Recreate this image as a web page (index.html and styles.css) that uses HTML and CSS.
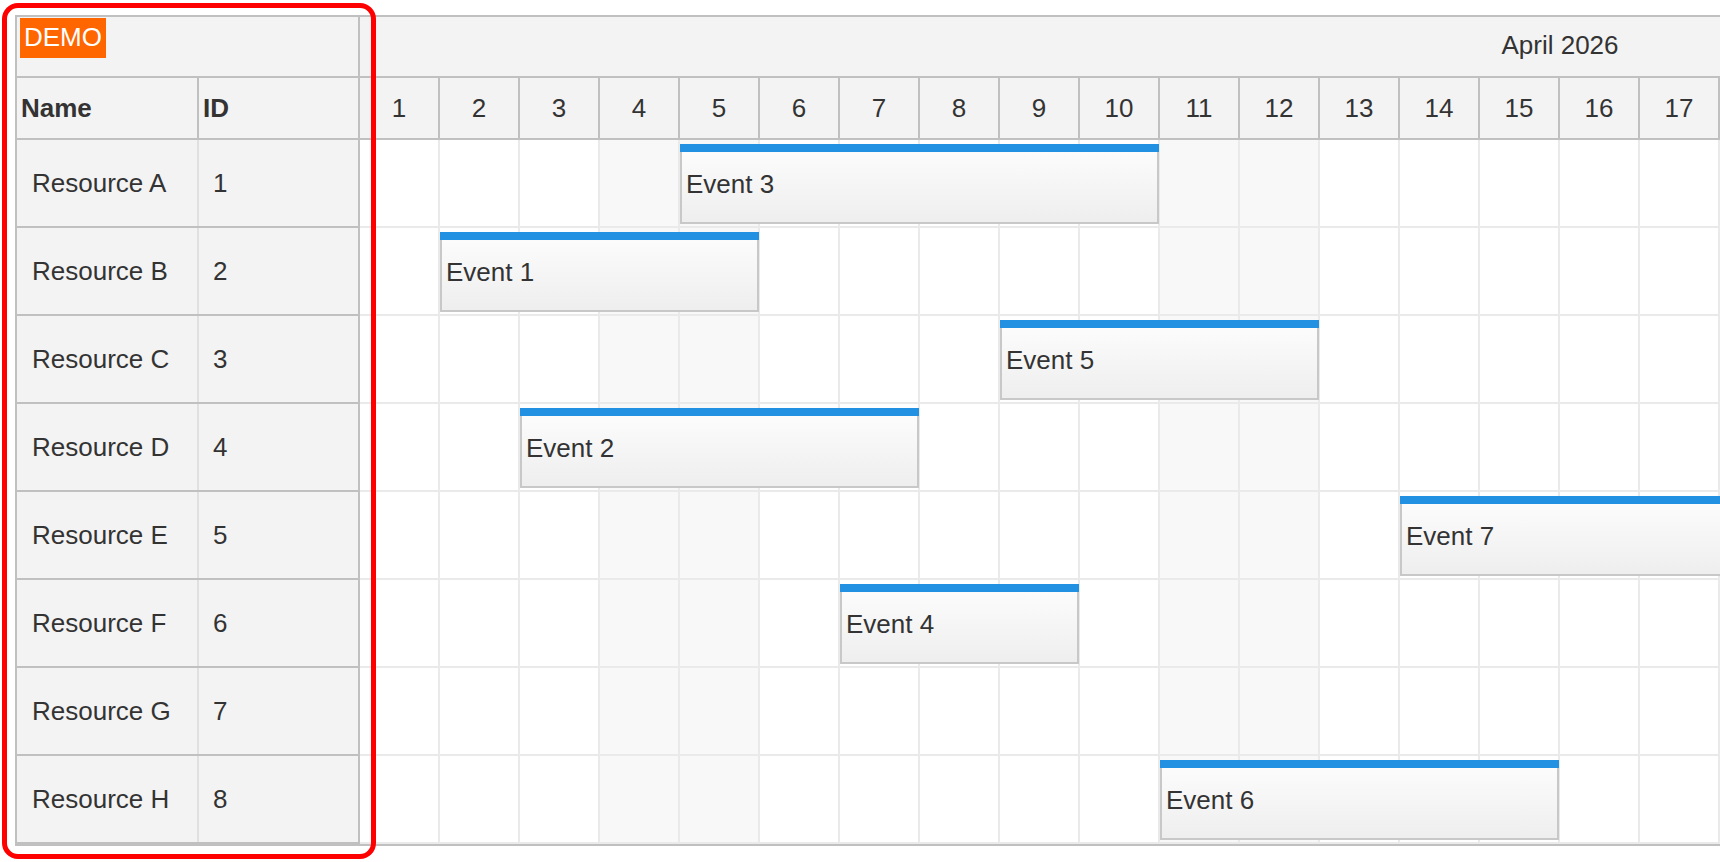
FILE: index.html
```html
<!DOCTYPE html>
<html>
<head>
    <title>Scheduler</title>
    <link rel="stylesheet" href="styles.css">
</head>
<body>
    <div class="scheduler">
        <div class="resources">
            <div class="corner"><span class="demo">DEMO</span></div>
            <div class="res-head">
                <div class="col-name">Name</div>
                <div class="col-id">ID</div>
            </div>
            <div class="res-row"><div class="col-name">Resource A</div><div class="col-id">1</div></div>
            <div class="res-row"><div class="col-name">Resource B</div><div class="col-id">2</div></div>
            <div class="res-row"><div class="col-name">Resource C</div><div class="col-id">3</div></div>
            <div class="res-row"><div class="col-name">Resource D</div><div class="col-id">4</div></div>
            <div class="res-row"><div class="col-name">Resource E</div><div class="col-id">5</div></div>
            <div class="res-row"><div class="col-name">Resource F</div><div class="col-id">6</div></div>
            <div class="res-row"><div class="col-name">Resource G</div><div class="col-id">7</div></div>
            <div class="res-row"><div class="col-name">Resource H</div><div class="col-id">8</div></div>
        </div>

        <div class="timeline">
            <div class="months">
                <div class="month">April 2026</div>
            </div>
            <div class="days">
                <div class="day">1</div><div class="day">2</div><div class="day">3</div><div class="day">4</div>
                <div class="day">5</div><div class="day">6</div><div class="day">7</div><div class="day">8</div>
                <div class="day">9</div><div class="day">10</div><div class="day">11</div><div class="day">12</div>
                <div class="day">13</div><div class="day">14</div><div class="day">15</div><div class="day">16</div>
                <div class="day">17</div>
            </div>

            <div class="lane">
                <div class="event" style="left: 320px; width: 479px;">Event 3</div>
            </div>
            <div class="lane">
                <div class="event" style="left: 80px; width: 319px;">Event 1</div>
            </div>
            <div class="lane">
                <div class="event" style="left: 640px; width: 319px;">Event 5</div>
            </div>
            <div class="lane">
                <div class="event" style="left: 160px; width: 399px;">Event 2</div>
            </div>
            <div class="lane">
                <div class="event" style="left: 1040px; width: 399px;">Event 7</div>
            </div>
            <div class="lane">
                <div class="event" style="left: 480px; width: 239px;">Event 4</div>
            </div>
            <div class="lane"></div>
            <div class="lane">
                <div class="event" style="left: 800px; width: 399px;">Event 6</div>
            </div>
        </div>
    </div>

    <div class="highlight"></div>
</body>
</html>
```

FILE: styles.css
```css
html, body {
    margin: 0;
    padding: 0;
    background: #fff;
    overflow: hidden;
}
body {
    font-family: "Liberation Sans", Arial, sans-serif;
    font-size: 26px;
    color: #333;
}
.scheduler {
    display: flex;
    margin: 15px 0 0 15px;
    width: 1705px;
    border-top: 2px solid #c0c0c0;
    border-left: 2px solid #c0c0c0;
    border-bottom: 2px solid #c0c0c0;
    box-sizing: border-box;
    overflow: hidden;
}
.resources {
    flex: 0 0 343px;
    background: #f3f3f3;
}
.corner {
    height: 61px;
    box-sizing: border-box;
    padding: 1px 0 0 3px;
    border-right: 2px solid #c0c0c0;
    border-bottom: 2px solid #c0c0c0;
}
.demo {
    display: inline-block;
    background: #ff6600;
    color: #fff;
    line-height: 30px;
    padding: 4px 4px 6px 4px;
}
.res-head, .res-row {
    display: flex;
    box-sizing: border-box;
    border-bottom: 2px solid #c0c0c0;
}
.res-head {
    height: 62px;
    font-weight: bold;
}
.res-row {
    height: 88px;
}
.col-name, .col-id {
    display: flex;
    align-items: center;
    box-sizing: border-box;
    white-space: nowrap;
}
.col-name {
    width: 182px;
    border-right: 2px solid #c0c0c0;
}
.col-id {
    width: 161px;
    border-right: 2px solid #c0c0c0;
}
.res-head .col-name,
.res-head .col-id {
    padding-left: 4px;
}
.res-row .col-name {
    padding-left: 15px;
    border-right-color: #e0e0e0;
}
.res-row .col-id {
    padding-left: 14px;
}
.timeline {
    flex: 1;
    overflow: hidden;
}
.months {
    height: 61px;
    box-sizing: border-box;
    border-bottom: 2px solid #c0c0c0;
    background: #f3f3f3;
}
.month {
    width: 2400px;
    height: 59px;
    display: flex;
    align-items: center;
    justify-content: center;
    padding-bottom: 2px;
    box-sizing: border-box;
}
.days {
    display: flex;
    height: 62px;
    box-sizing: border-box;
    border-bottom: 2px solid #c0c0c0;
    background: #f3f3f3;
}
.day {
    flex: 0 0 80px;
    box-sizing: border-box;
    border-right: 2px solid #c0c0c0;
    display: flex;
    align-items: center;
    justify-content: center;
}
.lane {
    position: relative;
    height: 88px;
    box-sizing: border-box;
    border-bottom: 2px solid #eaeaea;
    background-image:
        linear-gradient(to right, transparent 78px, #eaeaea 78px),
        linear-gradient(to right, #fff 240px, #f8f8f8 240px, #f8f8f8 400px, #fff 400px);
    background-size: 80px 100%, 560px 100%;
}
.event {
    position: absolute;
    top: 4px;
    height: 80px;
    box-sizing: border-box;
    border: 2px solid #c8c8c8;
    background: linear-gradient(to bottom, #fdfdfd, #eeeeee);
    display: flex;
    align-items: center;
    padding-left: 4px;
    white-space: nowrap;
}
.event::before {
    content: "";
    position: absolute;
    top: -2px;
    left: -2px;
    right: -2px;
    height: 8px;
    background: #2391e1;
}
.highlight {
    position: absolute;
    left: 2px;
    top: 3px;
    width: 374px;
    height: 856px;
    box-sizing: border-box;
    border: 5px solid #ff0000;
    border-radius: 16px;
    pointer-events: none;
}
```
